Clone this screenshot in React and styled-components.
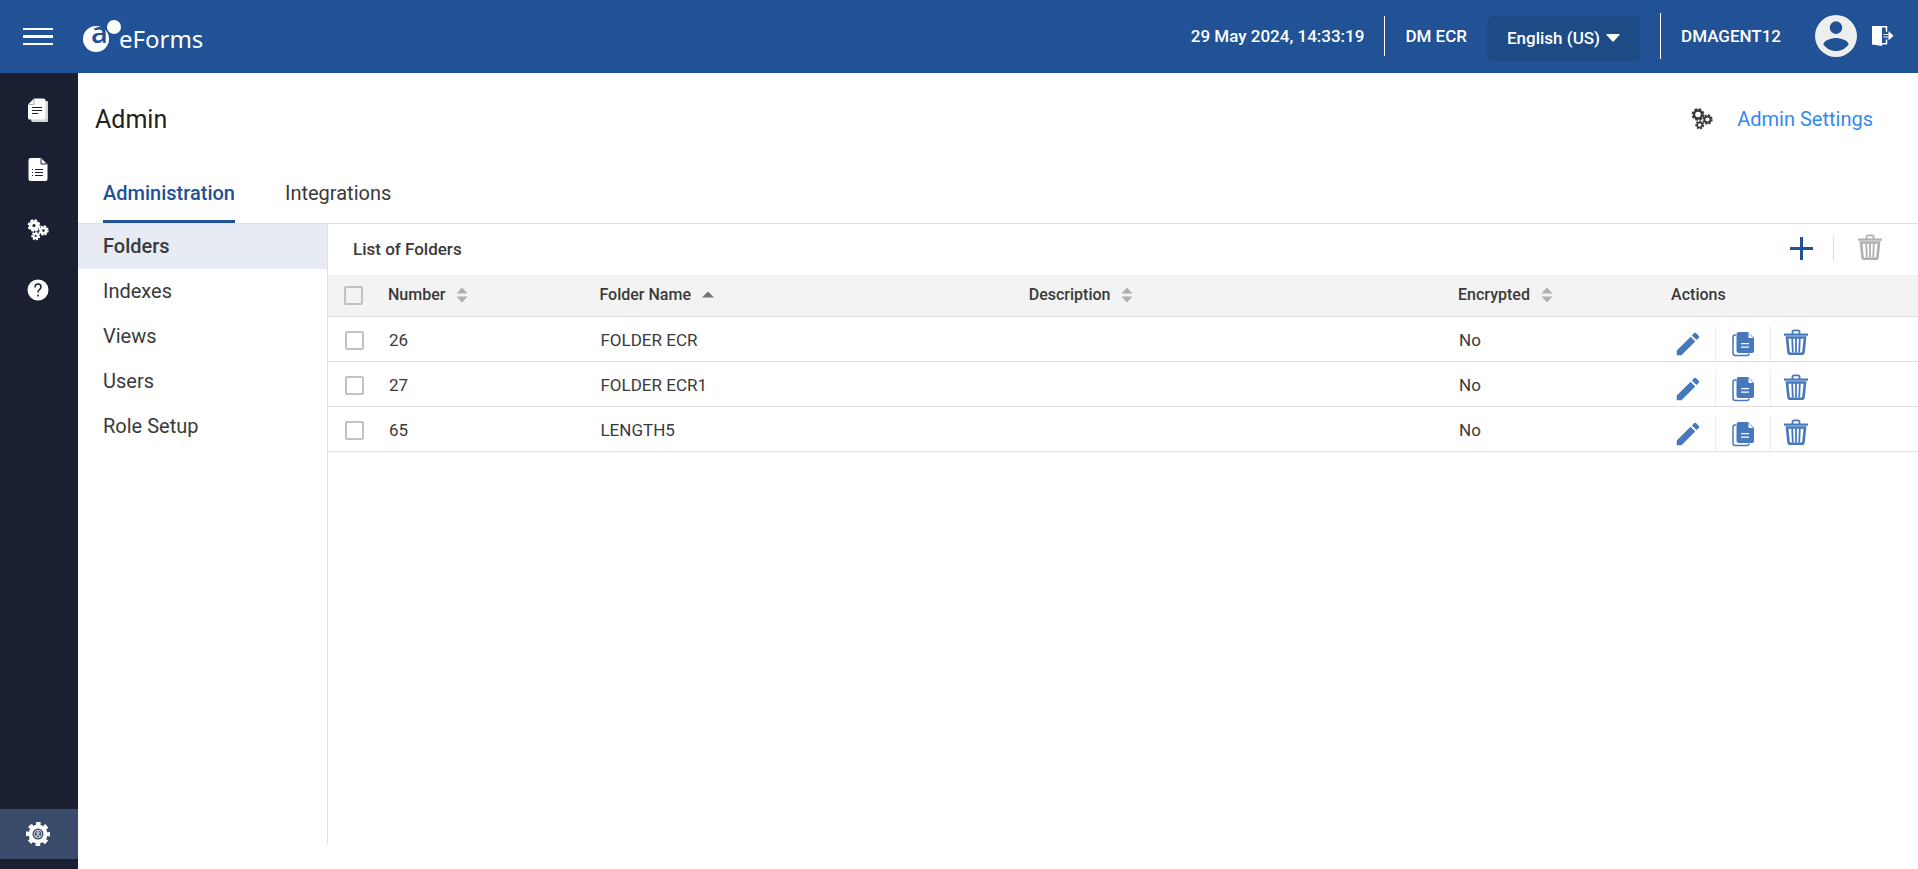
import styled, { createGlobalStyle, ThemeProvider } from 'styled-components';
import React, { useState } from 'react';

const theme = {
  color: {
    primary: '#205295',
    primaryDark: '#1e4a85',
    action: '#4678bd',
    link: '#3389f0',
    rail: '#1a2032',
    railActive: '#3a4a6b',
    selected: '#e7ebf4',
    line: '#e0e0e0',
    head: '#f3f3f3',
    text: '#3a3a3a',
    muted: '#b0b0b0',
    white: '#ffffff',
  },
};

const GlobalStyle = createGlobalStyle`
*, *::before, *::after { box-sizing: border-box; }
body {
  color: ${theme.color.text};
  background: ${theme.color.white};
  font-family: Roboto, "Liberation Sans", sans-serif;
  font-size: 17px;
  margin: 0;
}
button, select, input { font: inherit; color: inherit; }
`;

const Page = styled.div`
  min-height: 100vh;
  flex-direction: column;
  display: flex;
`;

/* HEADER */

const TopBar = styled.header`
  background: ${props => props.theme.color.primary};
  color: ${props => props.theme.color.white};
  justify-content: space-between;
  align-items: center;
  padding: 0 24px 1px 22px;
  font-weight: 500;
  height: 73px;
  display: flex;
`;

const Group = styled.div`
  gap: ${props => props.$gap || 0}px;
  align-items: center;
  display: flex;
`;

const IconButton = styled.button`
  color: ${props => props.$color || 'inherit'};
  width: ${props => props.$size || 32}px;
  height: ${props => props.$size || 32}px;
  justify-content: center;
  align-items: center;
  background: none;
  cursor: pointer;
  display: flex;
  padding: 0;
  border: 0;
  flex: none;

  &:disabled { cursor: default; }
`;

const Brand = styled.a`
  color: inherit;
  text-decoration: none;
  display: flex;
`;

const Bar = styled.span`
  background: ${props => props.$color || '#ffffff'};
  height: ${props => props.$height}px;
  width: 1px;
  flex: none;
`;

const Language = styled.label`
  background: ${props => props.theme.color.primaryDark};
  align-items: center;
  border-radius: 5px;
  margin-top: 4px;
  padding: 0 20px;
  height: 45px;
  display: flex;
  gap: 6px;
`;

const Select = styled.select`
  appearance: none;
  field-sizing: content;
  background: none;
  cursor: pointer;
  padding: 0;
  border: 0;
`;

/* SIDE RAIL */

const Body = styled.div`
  display: flex;
  flex: 1;
`;

const Rail = styled.nav`
  background: ${props => props.theme.color.rail};
  justify-content: space-between;
  flex-direction: column;
  padding: 7px 0 10px;
  display: flex;
  width: 78px;
  flex: none;
`;

const RailLink = styled.a`
  background: ${props => (props.$active ? props.theme.color.railActive : 'none')};
  height: ${props => (props.$active ? 50 : 60)}px;
  color: ${props => props.theme.color.white};
  justify-content: center;
  align-items: center;
  padding-right: 2px;
  display: flex;
`;

/* CONTENT */

const Main = styled.main`
  flex-direction: column;
  padding-bottom: 25px;
  display: flex;
  min-width: 0;
  flex: 1;
`;

const TitleRow = styled.div`
  justify-content: space-between;
  align-items: center;
  padding: 0 45px 0 17px;
  height: 92px;
  display: flex;
`;

const Title = styled.h1`
  font-weight: 400;
  font-size: 25px;
  color: #222222;
  margin: 0;
`;

const SettingsLink = styled.a`
  color: ${props => props.theme.color.link};
  text-decoration: none;
  font-size: 20px;
`;

const Tabs = styled.div`
  border-bottom: 1px solid ${props => props.theme.color.line};
  padding: 0 25px;
  height: 59px;
  display: flex;
  gap: 50px;
`;

const Tab = styled.button`
  border: 0 solid ${props => (props.$active ? props.theme.color.primary : 'transparent')};
  border-bottom-width: 3px;
  color: ${props => (props.$active ? props.theme.color.primary : props.theme.color.text)};
  font-weight: ${props => (props.$active ? 500 : 400)};
  background: none;
  cursor: pointer;
  font-size: 20px;
  padding: 0;
`;

const Split = styled.div`
  display: flex;
  flex: 1;
`;

const SubNav = styled.nav`
  border-right: 1px solid ${props => props.theme.color.line};
  width: 250px;
  flex: none;
`;

const SubLink = styled.a`
  background: ${props => (props.$active ? props.theme.color.selected : 'none')};
  font-weight: ${props => (props.$active ? 500 : 400)};
  color: ${props => props.theme.color.text};
  text-decoration: none;
  align-items: center;
  padding: 0 25px 2px;
  font-size: 20px;
  height: 45px;
  display: flex;
`;

const Panel = styled.section`
  min-width: 0;
  flex: 1;
`;

const PanelHead = styled.div`
  justify-content: space-between;
  align-items: center;
  padding: 0 32px 2px 25px;
  height: 51px;
  display: flex;
`;

const PanelTitle = styled.h2`
  font-weight: 500;
  font-size: 17px;
  margin: 0;
`;

const Table = styled.table`
  border-collapse: separate;
  table-layout: fixed;
  border-spacing: 0;
  width: 100%;
`;

const Th = styled.th`
  width: ${props => props.$width || 'auto'};
  background: ${props => props.theme.color.head};
  border-bottom: 1px solid ${props => props.theme.color.line};
  padding: ${props => (props.$check ? '0 0 0 16px' : '0 0 2px')};
  text-align: left;
  font-weight: 500;
  font-size: 16px;
  height: 42px;
`;

const Td = styled.td`
  border-bottom: 1px solid ${props => props.theme.color.line};
  padding: 2px 0 0 ${props => (props.$check ? 17 : 1)}px;
  height: 45px;
`;

const SortButton = styled.button`
  align-items: center;
  background: none;
  cursor: pointer;
  display: flex;
  padding: 0;
  gap: 11px;
  border: 0;
`;

const Check = styled.input`
  border: 2px solid #c2c2c2;
  border-radius: 2px;
  appearance: none;
  background: none;
  cursor: pointer;
  display: block;
  height: 19px;
  width: 19px;
  margin: 0;

  &:checked { background: ${props => props.theme.color.primary}; }
`;

const Actions = styled.div`
  color: ${props => props.theme.color.action};
  align-items: center;
  padding-top: 7px;
  display: flex;
  height: 42px;
  gap: 11px;
`;

/* ICONS */

const Svg = ({ w = 24, h = w, box = `0 0 ${w} ${h}`, ...rest }) => (
  <svg width={w} height={h} viewBox={box} fill="currentColor" aria-hidden="true" {...rest} />
);

const MenuIcon = () => (
  <Svg w={32}>
    <path d="M1 8h30v2H1zM1 15h30v3H1zM1 23h30v2H1z" />
  </Svg>
);

const Logo = () => (
  <Svg w={124} h={56} box="0 -8 124 56">
    <circle cx="14" cy="23" r="13" />
    <text x="9" y="27" fill={theme.color.primary} fontFamily="Open Sans, sans-serif" fontSize="29" fontWeight="600">a</text>
    <circle cx="32" cy="11" r="7" />
    <text x="37" y="32" fontFamily="Noto Sans, sans-serif" fontSize="24" fontWeight="400">eForms</text>
  </Svg>
);

const Caret = () => (
  <Svg w={14} h={8}>
    <path d="M1 0h12q1.200 0 .4 1L8 7q-1 1-2 0L.6 1Q-.2 0 1 0z" />
  </Svg>
);

const AvatarIcon = () => (
  <Svg w={42} box="2 2 20 20" color="#eeeeee">
    <path d="M12 2a10 10 0 1 0 0 20 10 10 0 0 0 0-20zm0 3a3 3 0 1 1 0 6 3 3 0 0 1 0-6zm0 14.200c-2.500 0-4.710-1.280-6-3.220.03-1.990 4-3.080 6-3.080s5.970 1.090 6 3.080c-1.290 1.940-3.500 3.220-6 3.220z" />
  </Svg>
);

const ExitIcon = () => (
  <Svg w={22}>
    <path d="M0 1h10v20L0 19.500z" />
    <path d="M3 1.700h11.500v5M14.500 14.500v4.300H10" fill="none" stroke="currentColor" strokeWidth="1.500" />
    <path d="M11.500 9.500h6M11.500 12h6" stroke="currentColor" strokeWidth="1.200" />
    <path d="M16.500 6l5 4.800-5 4.800z" />
  </Svg>
);

const Gear = ({ cx, cy, r, ring, teeth = 8 }) => {
  const step = (2 * Math.PI * r) / teeth;
  return (
    <g fill="none" stroke="currentColor">
      <circle cx={cx} cy={cy} r={r - ring / 2} strokeWidth={ring} />
      <circle cx={cx} cy={cy} r={r} strokeWidth="2.400" strokeDasharray={`${step * 0.6} ${step * 0.4}`} />
    </g>
  );
};

const GearsIcon = ({ thin }) => (
  <Svg w={22}>
    <Gear cx={7} cy={6.5} r={5.2} ring={thin ? 2.4 : 3.6} />
    <Gear cx={16.5} cy={11.5} r={4} ring={thin ? 1.9 : 2.7} />
    <Gear cx={8.7} cy={17} r={3.3} ring={thin ? 1.5 : 2.2} teeth={7} />
  </Svg>
);

const AdminIcon = () => (
  <Svg w={28}>
    <g fill="none" stroke="currentColor">
      <circle cx="14" cy="14" r="7.500" strokeWidth="4" />
      <circle cx="14" cy="14" r="10" strokeWidth="4" strokeDasharray="4.400 3.454" strokeDashoffset="2.200" />
      <circle cx="14" cy="14" r="3.800" strokeWidth=".8" />
      <circle cx="14" cy="13" r="1.200" strokeWidth=".9" />
      <path d="M12 17q.3-2 2-2t2 2" strokeWidth=".9" />
    </g>
  </Svg>
);

const FormsIcon = () => (
  <Svg w={28}>
    <path d="M8 5h15q1 0 1 1v19q0 1-1 1H9q-2 0-2-2z" fill="#d3d5da" />
    <path d="M10 2.500h9.500q2 0 2 2v17.500q0 1.500-1.500 1.500H5.500Q4 23.500 4 22V8.500z" />
    <path d="M10 3v5.500H4.500" fill="none" stroke="#a6aab5" />
    <path d="M8 11.500h10M8 14.500h10M8 17.500h6" stroke={theme.color.rail} />
  </Svg>
);

const ListIcon = () => (
  <Svg w={28}>
    <path d="M6.500 2h10.500l6.500 6.500V23q0 2-2 2h-15q-2 0-2-2V4q0-2 2-2z" />
    <path d="M17 2.500v5.500h6" fill="none" stroke={theme.color.rail} />
    <path d="M8 13.500h1M8 16.500h1M8 19.500h1M11 13.500h8M11 16.500h8M11 19.500h8" stroke={theme.color.rail} />
  </Svg>
);

const HelpIcon = () => (
  <Svg w={28}>
    <circle cx="14" cy="14" r="10.500" />
    <path d="M11 11.500q0-3.500 3-3.500t3 3q0 1.500-1.600 2.600-1.400 1-1.400 2.900M14 18.500v2" fill="none" stroke={theme.color.rail} strokeWidth="1.500" />
  </Svg>
);

const PlusIcon = () => (
  <Svg w={23}>
    <path d="M10 0h3v10h10v3H13v10h-3V13H0v-3h10z" />
  </Svg>
);

const TrashIcon = () => (
  <Svg w={24} h={30}>
    <path d="M8.500 5V3q0-1.600 1.600-1.600h3.800Q15.500 1.400 15.500 3v2" fill="none" stroke="currentColor" strokeWidth="1.800" />
    <path d="M0 4.500h24v2.200H0z" />
    <path d="M3 8.500h18l-1.500 14.500q-.2 1.800-2 1.800h-11q-1.800 0-2-1.800z" fill="none" stroke="currentColor" strokeWidth="2.600" />
    <path d="M8.200 9l.6 14.500M12 9v14.500M15.800 9l-.6 14.500" fill="none" stroke="currentColor" strokeWidth="1.800" />
  </Svg>
);

const PencilIcon = () => (
  <Svg w={30} box="0 0 24 24">
    <path d="M3 17.250V21h3.750L17.810 9.940l-3.750-3.750L3 17.250zM20.710 7.040a1 1 0 0 0 0-1.410l-2.340-2.340a1 1 0 0 0-1.410 0l-1.830 1.830 3.750 3.750 1.830-1.830z" />
  </Svg>
);

const CopyIcon = () => (
  <Svg w={22} h={26}>
    <path d="M4 4H3Q1 4 1 6v16q0 2.500 2.500 2.500H15q2 0 2-2" fill="none" stroke="currentColor" strokeWidth="1.500" />
    <path d="M7 1h9l6 6v13q0 2-2 2H7q-2.500 0-2.500-2.500v-16Q4.500 1 7 1z" />
    <path d="M16.500 2l4.500 5h-3.500q-1 0-1-1z" fill="#ffffff" />
    <path d="M9 12.700h8M9 16.200h8" stroke="#ffffff" strokeWidth="1.300" />
  </Svg>
);

const SortIcon = ({ sorted }) => (
  <Svg w={12} h={16} color={sorted ? '#757575' : theme.color.muted}>
    {sorted
      ? <path d="M0 10.500L6 4.500l6 6z" />
      : <path d="M.5 6.500L6 .5l5.500 6zM.5 9.500h11L6 15.500z" />}
  </Svg>
);

/* DATA */

const railItems = [
  { label: 'Forms', icon: <FormsIcon /> },
  { label: 'Lists', icon: <ListIcon /> },
  { label: 'Settings', icon: <GearsIcon /> },
  { label: 'Help', icon: <HelpIcon /> },
];

const sections = ['Folders', 'Indexes', 'Views', 'Users', 'Role Setup'];

const columns = [
  { label: 'Number', width: '13.3%' },
  { label: 'Folder Name', width: '27%', sorted: true },
  { label: 'Description', width: '27%' },
  { label: 'Encrypted', width: '13.4%' },
];

const folders = [
  { number: 26, name: 'FOLDER ECR', description: '', encrypted: 'No' },
  { number: 27, name: 'FOLDER ECR1', description: '', encrypted: 'No' },
  { number: 65, name: 'LENGTH5', description: '', encrypted: 'No' },
];

const FolderRow = ({ data: { number, name, description, encrypted } }) => (
  <tr>
    <Td $check><Check type="checkbox" aria-label={`Select ${name}`} /></Td>
    <Td>{number}</Td>
    <Td>{name}</Td>
    <Td>{description}</Td>
    <Td>{encrypted}</Td>
    <Td>
      <Actions>
        <IconButton aria-label={`Edit ${name}`}><PencilIcon /></IconButton>
        <Bar $height={35} $color="#ececec" />
        <IconButton aria-label={`Copy ${name}`}><CopyIcon /></IconButton>
        <Bar $height={35} $color="#ececec" />
        <IconButton aria-label={`Delete ${name}`} $size={28}><TrashIcon /></IconButton>
      </Actions>
    </Td>
  </tr>
);

const App = () => {
  const [tab, setTab] = useState('Administration');

  return (
    <ThemeProvider theme={theme}>
      <GlobalStyle />
      <Page>
        <TopBar>
          <Group $gap={28}>
            <IconButton aria-label="Menu"><MenuIcon /></IconButton>
            <Brand href="#home" aria-label="eForms"><Logo /></Brand>
          </Group>
          <Group $gap={20}>
            <span>29 May 2024, 14:33:19</span>
            <Bar $height={40} />
            <span>DM ECR</span>
            <Language>
              <Select aria-label="Language" defaultValue="en">
                <option value="en">English (US)</option>
              </Select>
              <Caret />
            </Language>
            <Bar $height={46} />
            <Group $gap={34}>
              <span>DMAGENT12</span>
              <Group $gap={15}>
                <IconButton aria-label="Profile" $size={42}><AvatarIcon /></IconButton>
                <IconButton aria-label="Log out" $size={22}><ExitIcon /></IconButton>
              </Group>
            </Group>
          </Group>
        </TopBar>
        <Body>
          <Rail>
            <div>
              {railItems.map(({ label, icon }) => (
                <RailLink key={label} href="#" aria-label={label}>{icon}</RailLink>
              ))}
            </div>
            <RailLink href="#admin" aria-label="Admin" $active><AdminIcon /></RailLink>
          </Rail>
          <Main>
            <TitleRow>
              <Title>Admin</Title>
              <Group $gap={24}>
                <GearsIcon thin />
                <SettingsLink href="#settings">Admin Settings</SettingsLink>
              </Group>
            </TitleRow>
            <Tabs>
              {['Administration', 'Integrations'].map(name => (
                <Tab key={name} $active={tab === name} onClick={() => setTab(name)}>{name}</Tab>
              ))}
            </Tabs>
            <Split>
              <SubNav>
                {sections.map(name => (
                  <SubLink key={name} href="#" $active={name === 'Folders'}>{name}</SubLink>
                ))}
              </SubNav>
              <Panel>
                <PanelHead>
                  <PanelTitle>List of Folders</PanelTitle>
                  <Group $gap={20}>
                    <IconButton aria-label="Add folder" $size={24} $color={theme.color.primary}><PlusIcon /></IconButton>
                    <Bar $height={25} $color="#dddddd" />
                    <IconButton aria-label="Delete folders" $color={theme.color.muted} disabled><TrashIcon /></IconButton>
                  </Group>
                </PanelHead>
                <Table>
                  <thead>
                    <tr>
                      <Th $check $width="60px"><Check type="checkbox" aria-label="Select all" /></Th>
                      {columns.map(({ label, width, sorted }) => (
                        <Th key={label} $width={width}>
                          <SortButton>{label}<SortIcon sorted={sorted} /></SortButton>
                        </Th>
                      ))}
                      <Th>Actions</Th>
                    </tr>
                  </thead>
                  <tbody>
                    {folders.map(folder => <FolderRow key={folder.number} data={folder} />)}
                  </tbody>
                </Table>
              </Panel>
            </Split>
          </Main>
        </Body>
      </Page>
    </ThemeProvider>
  );
};

export default App;
